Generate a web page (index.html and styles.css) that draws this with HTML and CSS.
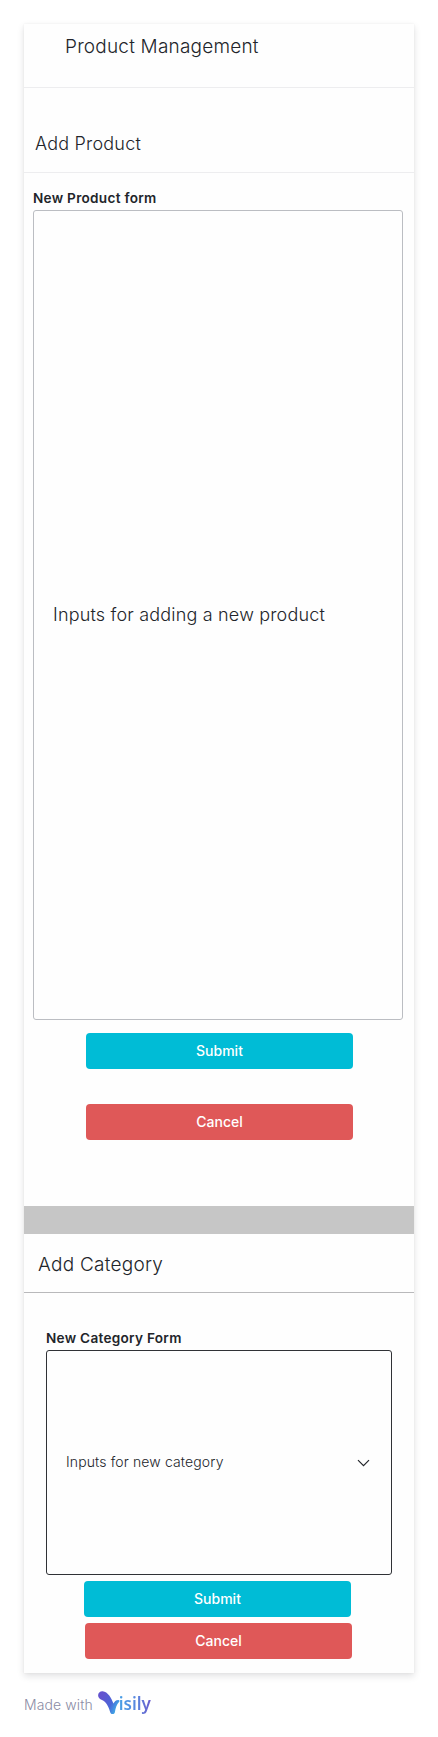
FILE: index.html
```html
<!DOCTYPE html>
<html lang="en">
<head>
<meta charset="utf-8">
<title>Product Management</title>
<link rel="stylesheet" href="styles.css">
</head>
<body>
<main class="card">
  <header class="page-header"><h1 class="page-title">Product Management</h1></header>
  <section class="product">
    <h2 class="product-title">Add Product</h2>
    <div class="product-form">
      <div class="label">New Product form</div>
      <div class="product-field"><span class="product-text">Inputs for adding a new product</span></div>
      <div class="product-actions">
        <button class="btn submit">Submit</button>
        <button class="btn cancel">Cancel</button>
      </div>
    </div>
  </section>
  <div class="divider"></div>
  <section class="category">
    <h2 class="category-title">Add Category</h2>
    <div class="category-form">
      <div class="label">New Category Form</div>
      <div class="category-field">
        <span class="category-text">Inputs for new category</span>
        <svg class="chevron" width="14" height="8" viewBox="0 0 14 8"><path d="M1 1.200 6.500 6.700 12 1.200"/></svg>
      </div>
      <div class="category-actions">
        <button class="btn submit">Submit</button>
        <button class="btn cancel shifted">Cancel</button>
      </div>
    </div>
  </section>
</main>
<footer class="credit">
  <span class="made">Made with</span>
  <span class="brand">
    <svg class="mark" width="22" height="24" viewBox="0 0 22 24">
      <defs><linearGradient id="v" x1="0" y1="0" x2="1" y2="0.5"><stop offset="0.25" stop-color="#6354cf"/><stop offset="0.7" stop-color="#4a66d8"/><stop offset="1" stop-color="#3fa8e6"/></linearGradient></defs>
      <path fill="url(#v)" d="M4.600 0.200C2 .1 0 2 .1 4.400.2 6.700 1.800 7.900 4 8.900c4 1.900 6.600 6 8.200 12.300.6 2.500 4.200 2.500 4.700 0 .7-4.400 1.600-7.700 4.300-10.500.7-.8.2-1.900-.9-1.800-2.400.2-3.900 1.500-4.800 3.700C13.600 7.500 9.800 0.400 4.600 0.200Z"/>
    </svg>
    <span class="word">isily</span>
  </span>
</footer>
</body>
</html>
```
FILE: styles.css
```css
* { box-sizing: border-box; }
body {
  margin: 0;
  padding: 24px 24px 0;
  background: #fff;
  font-family: Inter, "Liberation Sans", sans-serif;
  color: #22252a;
}
h1, h2 { margin: 0; font-weight: 300; }
.card {
  height: 1649px;
  background: #fefefe;
  box-shadow: 0 3px 7px rgba(23, 26, 31, .13), 0 0 2px rgba(23, 26, 31, .06);
}
.page-header {
  height: 64px;
  padding: 9px 0 0 41px;
  border-bottom: 1px solid #ededef;
}
.page-title { font-size: 19px; line-height: 28px; letter-spacing: .2px; }
.product { height: 1118px; }
.product-title {
  height: 85px;
  padding: 42px 0 0 11px;
  border-bottom: 1px solid #ededef;
  font-size: 18px;
  line-height: 28px;
  letter-spacing: .2px;
}
.product-form { padding: 14px 11px 0 9px; }
.label { font-size: 13.6px; line-height: 22px; font-weight: 600; letter-spacing: .28px; }
.product-field {
  height: 810px;
  margin-top: 1px;
  padding-left: 19px;
  display: flex;
  align-items: center;
  border: 1px solid #bbbdc2;
  border-radius: 3px;
}
.product-text { font-size: 18px; line-height: 28px; font-weight: 300; letter-spacing: .18px; }
.product-actions {
  display: flex;
  flex-direction: column;
  gap: 35px;
  padding: 13px 0 0 53px;
}
.btn {
  width: 267px;
  height: 36px;
  padding: 0;
  border: 0;
  border-radius: 4px;
  color: #fff;
  font: 450 14px/22px Inter, "Liberation Sans", sans-serif;
}
.submit { background: #00bcd6; }
.cancel { background: #df5858; }
.divider { height: 28px; background: #c6c6c6; }
.category-title {
  height: 59px;
  padding: 17px 0 0 14px;
  border-bottom: 1px solid #b9b9bb;
  font-size: 19px;
  line-height: 28px;
  letter-spacing: .25px;
}
.category-form { padding: 34px 22px 0; }
.category-field {
  height: 225px;
  margin-top: 1px;
  padding: 0 20px 0 19px;
  display: flex;
  align-items: center;
  justify-content: space-between;
  border: 1px solid #303236;
  border-radius: 3px;
}
.category-text { margin-bottom: 2px; font-size: 14px; line-height: 22px; font-weight: 300; letter-spacing: .13px; }
.chevron { fill: none; stroke: #22252a; stroke-width: 1.2; }
.category-actions {
  display: flex;
  flex-direction: column;
  gap: 6px;
  padding: 6px 0 0 38px;
}
.shifted { margin-left: 1px; }
.credit { display: flex; padding-top: 18px; }
.made { padding-top: 3px; font-size: 14px; line-height: 22px; font-weight: 300; letter-spacing: .1px; color: #8b8ca5; }
.brand { display: flex; margin-left: 5px; }
.word {
  margin-left: -1px;
  padding-top: 1px;
  font: 600 17px/24px "Noto Sans", sans-serif;
  background: linear-gradient(90deg, #48a0e6, #5a86de 55%, #6a5ccc);
  -webkit-background-clip: text;
  background-clip: text;
  color: transparent;
}
```
